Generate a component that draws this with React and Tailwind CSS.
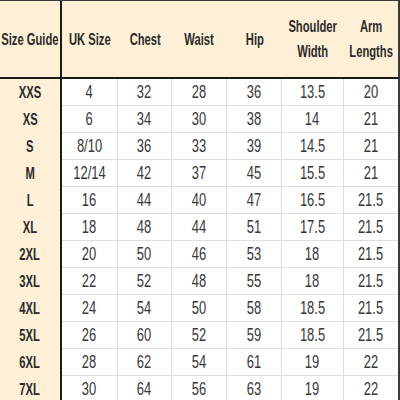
import React from 'react';

const cols = ['w-[62px]', 'w-[56px]', 'w-[54px]', 'w-[55px]', 'w-[55px]', 'w-[62px]', 'w-[54px]'];

const headers = ['Size Guide', 'UK Size', 'Chest', 'Waist', 'Hip', 'Shoulder\nWidth', 'Arm\nLengths'];

const rows = [
  ['XXS', '4', '32', '28', '36', '13.5', '20'],
  ['XS', '6', '34', '30', '38', '14', '21'],
  ['S', '8/10', '36', '33', '39', '14.5', '21'],
  ['M', '12/14', '42', '37', '45', '15.5', '21'],
  ['L', '16', '44', '40', '47', '16.5', '21.5'],
  ['XL', '18', '48', '44', '51', '17.5', '21.5'],
  ['2XL', '20', '50', '46', '53', '18', '21.5'],
  ['3XL', '22', '52', '48', '55', '18', '21.5'],
  ['4XL', '24', '54', '50', '58', '18.5', '21.5'],
  ['5XL', '26', '60', '52', '59', '18.5', '21.5'],
  ['6XL', '28', '62', '54', '61', '19', '22'],
  ['7XL', '30', '64', '56', '63', '19', '22'],
];

const font = { fontFamily: '"Liberation Sans", Arial, sans-serif' };

export default function App() {
  return (
    <div className="w-[400px] h-[400px] overflow-hidden bg-white" style={font}>
      <div className="w-[400px] border-r-2 border-t border-[#3a3a3a]">
        {/* header */}
        <div className="flex h-[78px] bg-[#fdf0d6] border-b-2 border-[#1a1a1a]">
          {headers.map((h, i) => (
            <div
              key={i}
              className={`${cols[i]} shrink-0 flex items-center justify-center text-center text-[16px] leading-[25px] font-bold text-[#2b2b2b] ${i === 0 ? 'border-r-2 border-[#1a1a1a]' : ''}`}
            >
              <span className="inline-block scale-x-[0.7] whitespace-pre text-center">{h}</span>
            </div>
          ))}
        </div>
        {/* body */}
        {rows.map((r, ri) => (
          <div key={ri} className="flex h-[27px]">
            {r.map((c, ci) =>
              ci === 0 ? (
                <div
                  key={ci}
                  className={`${cols[ci]} shrink-0 flex items-center justify-center bg-[#fdf0d6] border-r-2 border-[#1a1a1a] text-[17px] font-bold text-[#2b2b2b]`}
                >
                  <span className="inline-block scale-x-[0.66] whitespace-nowrap">{c}</span>
                </div>
              ) : (
                <div
                  key={ci}
                  className={`${cols[ci]} shrink-0 flex items-center justify-center border-b border-[#dedede] text-[18px] text-[#383838] ${ci < 6 ? 'border-r' : ''}`}
                >
                  <span className="inline-block scale-x-[0.72] whitespace-nowrap">{c}</span>
                </div>
              )
            )}
          </div>
        ))}
      </div>
    </div>
  );
}
